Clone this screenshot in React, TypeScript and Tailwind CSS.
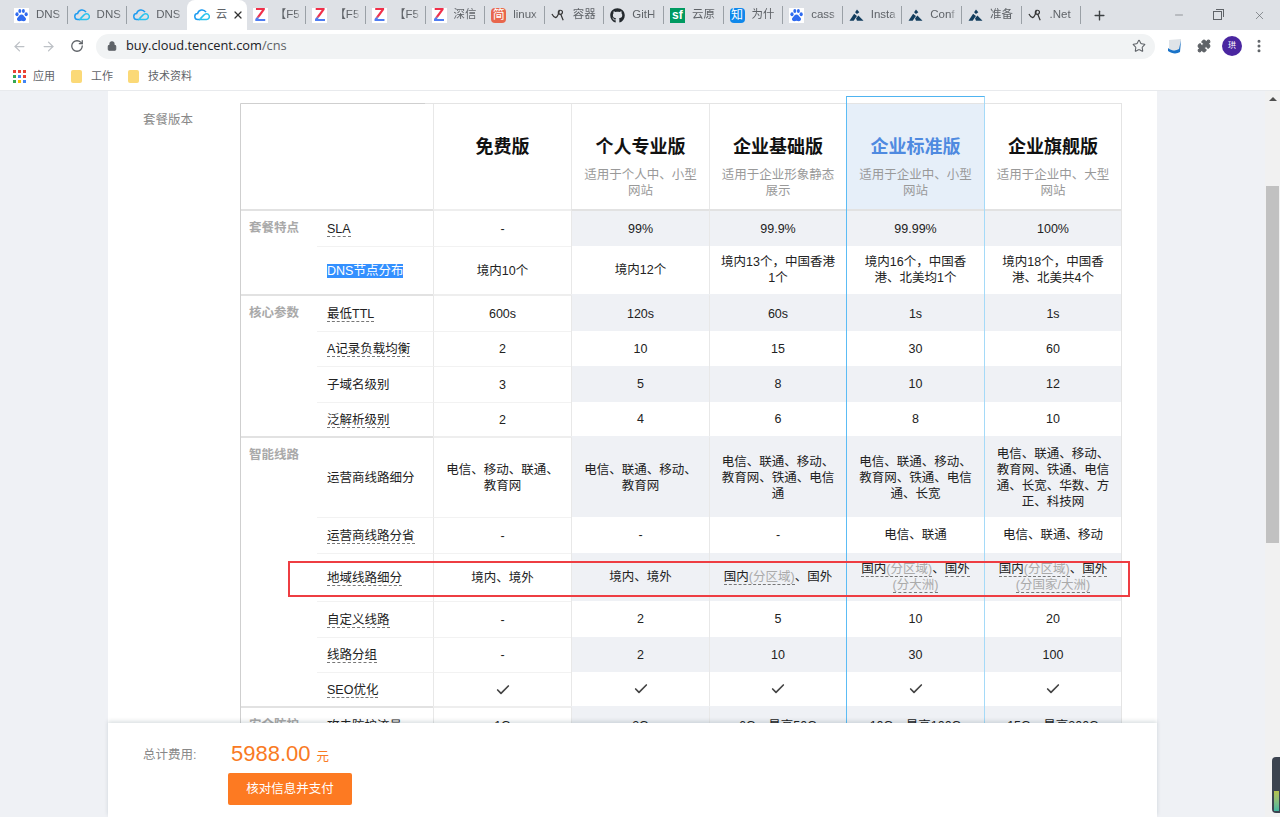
import type { ReactNode } from "react";
import {
  ArrowLeft,
  ArrowRight,
  Check,
  EllipsisVertical,
  Lock,
  Minus,
  Plus,
  Puzzle,
  RotateCw,
  Star,
  X,
} from "lucide-react";
import { FaGithub } from "react-icons/fa";

function Baidu() {
  return (
    <svg viewBox="0 0 16 16" className="size-[15px] bg-white">
      <g fill="#2f6bf0">
        <ellipse cx="3.2" cy="6.6" rx="1.7" ry="2.1" />
        <ellipse cx="6.2" cy="3.2" rx="1.6" ry="2.1" />
        <ellipse cx="10" cy="3.2" rx="1.6" ry="2.1" />
        <ellipse cx="13" cy="6.6" rx="1.7" ry="2.1" />
        <path d="M8 7c-2 0-2.6 2-4 3.2-1.500 1.300-.8 3.800 1.500 3.800 1 0 1.700-.4 2.500-.4s1.500.4 2.500.4c2.300 0 3-2.500 1.500-3.800C10.600 9 10 7 8 7z" />
      </g>
    </svg>
  );
}

function Cloud() {
  return (
    <svg viewBox="0 0 16 16" className="size-[16px]" fill="none" strokeWidth="1.5">
      <path d="M6 12.500H4a3 3 0 0 1-.4-6A4.600 4.600 0 0 1 12 5.200" stroke="#1f9cf0" />
      <path d="M5 12.500h7.500a2.900 2.900 0 1 0-2.400-4.600L6.400 11.600" stroke="#28c3ee" />
    </svg>
  );
}

function ZLogo() {
  return (
    <span className="flex size-[15px] items-center justify-center bg-white">
      <span className="bg-gradient-to-b from-[#f0304a] from-55% to-[#4f7cf0] to-70% bg-clip-text text-[18px] leading-[15px] font-bold text-transparent">
        Z
      </span>
    </span>
  );
}

function Jian() {
  return (
    <span className="flex size-[15px] items-center justify-center rounded-sm bg-[#e8664c] text-[12px] leading-none text-white">
      简
    </span>
  );
}

function Sf() {
  return (
    <span className="flex size-[15px] items-center justify-center bg-[#009a61] text-[12px] leading-none font-bold text-white">
      sf
    </span>
  );
}

function Zhi() {
  return (
    <span className="flex size-[15px] items-center justify-center rounded-sm bg-[#0f88eb] text-[12px] leading-none text-white">
      知
    </span>
  );
}

function Curl() {
  return (
    <svg viewBox="0 0 16 16" className="size-[15px]" fill="none" stroke="#333" strokeWidth="1.300">
      <path d="M1 6.500c1 2 2.500 3.500 4 3.800C7.500 9 8.500 5 9 2" />
      <circle cx="10" cy="4.600" r="2.200" />
      <path d="M10.500 7l2.500 6" />
    </svg>
  );
}

function Peak() {
  return (
    <svg viewBox="0 0 16 16" className="size-[15px]" fill="#123d5e">
      <path d="M8.500 1.500l2.500 3-2.500 2-2-2z" />
      <path d="M5.500 6l3 2.500-3.500 5H.5z" />
      <path d="M10 8l5.500 5.500H8.500L7.500 11z" />
    </svg>
  );
}

const tabs: { icon: ReactNode; title: string; active?: boolean; bare?: boolean }[] = [
  { icon: <Baidu />, title: "DNS" },
  { icon: <Cloud />, title: "DNS" },
  { icon: <Cloud />, title: "DNS", bare: true },
  { icon: <Cloud />, title: "云", active: true, bare: true },
  { icon: <ZLogo />, title: "【F5" },
  { icon: <ZLogo />, title: "【F5" },
  { icon: <ZLogo />, title: "【F5" },
  { icon: <ZLogo />, title: "深信" },
  { icon: <Jian />, title: "linux" },
  { icon: <Curl />, title: "容器" },
  { icon: <FaGithub className="size-[15px] text-[#24292e]" />, title: "GitH" },
  { icon: <Sf />, title: "云原" },
  { icon: <Zhi />, title: "为什" },
  { icon: <Baidu />, title: "cass" },
  { icon: <Peak />, title: "Insta" },
  { icon: <Peak />, title: "Conf" },
  { icon: <Peak />, title: "准备" },
  { icon: <Curl />, title: ".Net" },
];

function TabStrip() {
  return (
    <div className="flex h-[30px] items-center bg-[#dee1e6] pl-[8px] text-[11.5px] text-[#5f6368]">
      {tabs.map((tab, i) => (
        <div
          key={i}
          className={
            tab.active
              ? "relative flex h-[30px] w-[60px] shrink-0 items-center rounded-t-lg bg-white pl-[7px]"
              : "relative flex h-[30px] w-[59.6px] shrink-0 items-center pl-[6px]"
          }
        >
          {tab.icon}
          <span
            className={
              tab.active
                ? "ml-[6px] w-[12px] whitespace-nowrap"
                : "ml-[7px] w-[26px] whitespace-nowrap [mask-image:linear-gradient(to_right,black_80%,transparent)]"
            }
          >
            {tab.title}
          </span>
          {tab.active ? <X className="ml-[4px] size-[12px] text-[#333]" strokeWidth={2.500} /> : null}
          {tab.bare ? null : <span className="absolute right-0 h-[18px] w-px bg-[#9aa0a6]" />}
        </div>
      ))}
      <Plus className="ml-[11px] size-[15px] text-[#3c4043]" strokeWidth={2.200} />
      <div className="ml-auto flex items-center text-[#5f6368]">
        <Minus className="mr-[28px] size-[12px]" strokeWidth={1.200} />
        <span className="relative mr-[31px] size-[9px] border border-[#5f6368]">
          <span className="absolute -top-[3px] -right-[3px] size-[8px] border-t border-r border-[#5f6368]" />
        </span>
        <X className="mr-[14px] size-[13px]" strokeWidth={1.200} />
      </div>
    </div>
  );
}

function Toolbar() {
  return (
    <div className="flex h-[30px] items-center bg-white pt-[2px] pl-[12px] text-[#5f6368]">
      <ArrowLeft className="size-[15px] text-[#bdc1c6]" />
      <ArrowRight className="ml-[14px] size-[15px] text-[#bdc1c6]" />
      <RotateCw className="ml-[14px] size-[14px] text-[#5f6368]" strokeWidth={2.200} />
      <div className="ml-[12px] flex h-[25px] w-[1059px] items-center rounded-full bg-[#f1f3f4] pl-[11px] text-[13px]">
        <Lock className="size-[10px] fill-[#5f6368]" strokeWidth={2.500} />
        <span className="ml-[9px] [font-family:'Open_Sans','Noto_Sans',sans-serif] text-[12.800px] text-[#202124]">
          buy.cloud.tencent.com<span className="text-[#5f6368]">/cns</span>
        </span>
        <Star className="mr-[9px] ml-auto size-[14px] text-[#5f6368]" strokeWidth={1.800} />
      </div>
      <svg viewBox="0 0 16 16" className="ml-[12px] size-[16px]">
        <path d="M2 2l12-1-1 11H2z" fill="#dfe3e8" />
        <path d="M1 10c3 3 8 3 11 1l2-9-1 12c-3 2-8 2-12-1z" fill="#1a73c8" />
      </svg>
      <Puzzle className="ml-[14px] size-[14px] fill-[#5f6368]" />
      <span className="ml-[11px] flex size-[20px] items-center justify-center rounded-full bg-[#4a26a0] text-[8px] text-white">
        珙
      </span>
      <EllipsisVertical className="ml-[9px] size-[16px]" strokeWidth={2.500} />
    </div>
  );
}

function AppsGrid() {
  const dots = [
    "bg-[#ea4335]", "bg-[#ea4335]", "bg-[#ea4335]",
    "bg-[#34a853]", "bg-[#4285f4]", "bg-[#ea4335]",
    "bg-[#34a853]", "bg-[#fbbc04]", "bg-[#4285f4]",
  ];
  return (
    <span className="grid w-[13px] grid-cols-3 gap-[2px]">
      {dots.map((dot, i) => (
        <span key={i} className={`size-[3px] ${dot}`} />
      ))}
    </span>
  );
}

function Bookmarks() {
  return (
    <div className="flex h-[31px] items-center border-b border-[#e8eaed] bg-white pt-[2px] pl-[13px] text-[11px] text-[#5f6368]">
      <AppsGrid />
      <span className="ml-[7px]">应用</span>
      <span className="ml-[16px] h-[13px] w-[11px] rounded-[2px] bg-[#fbd977]" />
      <span className="ml-[9px]">工作</span>
      <span className="ml-[15px] h-[13px] w-[11px] rounded-[2px] bg-[#fbd977]" />
      <span className="ml-[9px]">技术资料</span>
    </div>
  );
}

function Dashed({ children }: { children: ReactNode }) {
  return <span className="border-b border-dashed border-[#777] leading-[14px]">{children}</span>;
}

const Tick = <Check className="mx-auto size-[16px] text-[#444]" strokeWidth={2.500} />;

const regionBig = (
  <>
    <Dashed>
      国内<span className="text-[#aaa]">(分区域)</span>
    </Dashed>
    、<Dashed>国外</Dashed>
    <br />
    <Dashed>
      <span className="text-[#aaa]">(分大洲)</span>
    </Dashed>
  </>
);

const regionMax = (
  <>
    <Dashed>
      国内<span className="text-[#aaa]">(分区域)</span>
    </Dashed>
    、<Dashed>国外</Dashed>
    <br />
    <Dashed>
      <span className="text-[#aaa]">(分国家/大洲)</span>
    </Dashed>
  </>
);

type Row = { label: ReactNode; height: string; cells: ReactNode[] };

const groups: { name: string; rows: Row[] }[] = [
  {
    name: "套餐特点",
    rows: [
      { label: <Dashed>SLA</Dashed>, height: "h-[37px]", cells: ["-", "99%", "99.9%", "99.99%", "100%"] },
      {
        label: <span className="bg-[#3390ff] text-white">DNS节点分布</span>,
        height: "h-[48px]",
        cells: [
          "境内10个",
          "境内12个",
          <>
            境内13个，中国香港
            <br />
            1个
          </>,
          <>
            境内16个，中国香
            <br />
            港、北美均1个
          </>,
          <>
            境内18个，中国香
            <br />
            港、北美共4个
          </>,
        ],
      },
    ],
  },
  {
    name: "核心参数",
    rows: [
      { label: <Dashed>最低TTL</Dashed>, height: "h-[37px]", cells: ["600s", "120s", "60s", "1s", "1s"] },
      { label: <Dashed>A记录负载均衡</Dashed>, height: "h-[35px]", cells: ["2", "10", "15", "30", "60"] },
      { label: "子域名级别", height: "h-[36px]", cells: ["3", "5", "8", "10", "12"] },
      { label: <Dashed>泛解析级别</Dashed>, height: "h-[34px]", cells: ["2", "4", "6", "8", "10"] },
    ],
  },
  {
    name: "智能线路",
    rows: [
      {
        label: "运营商线路细分",
        height: "h-[81px]",
        cells: [
          "电信、移动、联通、教育网",
          "电信、联通、移动、教育网",
          "电信、联通、移动、教育网、铁通、电信通",
          "电信、联通、移动、教育网、铁通、电信通、长宽",
          "电信、联通、移动、教育网、铁通、电信通、长宽、华数、方正、科技网",
        ],
      },
      {
        label: <Dashed>运营商线路分省</Dashed>,
        height: "h-[36px]",
        cells: ["-", "-", "-", "电信、联通", "电信、联通、移动"],
      },
      {
        label: <Dashed>地域线路细分</Dashed>,
        height: "h-[48px]",
        cells: [
          "境内、境外",
          "境内、境外",
          <>
            <Dashed>
              国内<span className="text-[#aaa]">(分区域)</span>
            </Dashed>
            、国外
          </>,
          regionBig,
          regionMax,
        ],
      },
      { label: <Dashed>自定义线路</Dashed>, height: "h-[36px]", cells: ["-", "2", "5", "10", "20"] },
      { label: <Dashed>线路分组</Dashed>, height: "h-[35px]", cells: ["-", "2", "10", "30", "100"] },
      { label: <Dashed>SEO优化</Dashed>, height: "h-[34px]", cells: [Tick, Tick, Tick, Tick, Tick] },
    ],
  },
  {
    name: "安全防护",
    rows: [
      {
        label: <Dashed>攻击防护流量</Dashed>,
        height: "h-[38px]",
        cells: ["1G", "2G", "6G，最高50G", "10G，最高100G", "15G，最高200G"],
      },
    ],
  },
];

const plans = [
  { name: "免费版", desc: "" },
  { name: "个人专业版", desc: "适用于个人中、小型网站" },
  { name: "企业基础版", desc: "适用于企业形象静态展示" },
  { name: "企业标准版", desc: "适用于企业中、小型网站", featured: true },
  { name: "企业旗舰版", desc: "适用于企业中、大型网站" },
];

function cellClass(g: number, r: number, c: number, gray: boolean) {
  const base = "flex items-center justify-center border-l border-[#e8e8e8] px-[10px] text-center";
  if (c === 0) {
    return r === 0 ? `${base} border-t-2 border-t-[#eeeeee]` : `${base} border-t border-t-[#f2f2f2]`;
  }
  if (!gray) return base;
  if (r > 0) return `${base} bg-[#eff1f5]`;
  // only the row right under the header keeps a line across the stripes
  return g === 0
    ? `${base} border-t-2 border-t-[#e2e2e2] bg-[#eff1f5]`
    : `${base} border-t-2 border-t-[#eff1f5] bg-[#eff1f5]`;
}

function PlanTable() {
  let stripe = 0;
  return (
    <div className="relative w-[882px] border-t border-r border-l border-t-[#e4e4e4] border-r-[#e4e4e4] border-l-[#cfcfcf] text-[12.5px] leading-[16px] text-[#222]">
      <div className="absolute -top-px left-0 w-[184px] border-t border-[#cfcfcf]" />
      <div className="grid h-[105px] grid-cols-[192px_138px_138px_137px_138px_137px]">
        <div />
        {plans.map((plan) => (
          <div
            key={plan.name}
            className={
              plan.featured
                ? "border-l border-[#e8e8e8] bg-[#e6eff9] px-[10px] pt-[31px] text-center"
                : "border-l border-[#e8e8e8] px-[10px] pt-[31px] text-center"
            }
          >
            <div
              className={
                plan.featured
                  ? "text-[18px] leading-[24px] font-bold text-[#4f8ae0]"
                  : "text-[18px] leading-[24px] font-bold text-[#111]"
              }
            >
              {plan.name}
            </div>
            <div className="mt-[8px] text-[#999]">{plan.desc}</div>
          </div>
        ))}
      </div>

      {groups.map((group, g) => (
        <div key={group.name} className="flex">
          <div className="w-[76px] shrink-0 border-t-2 border-[#e2e2e2] pt-[9px] pl-[8px] font-bold text-[#a9a9a9]">
            {group.name}
          </div>
          <div className="flex-1">
            {group.rows.map((row, r) => {
              const gray = stripe++ % 2 === 0;
              return (
                <div
                  key={r}
                  className={`grid grid-cols-[116px_138px_138px_137px_138px_137px] ${row.height}`}
                >
                  <div
                    className={
                      r
                        ? "flex items-center border-t border-[#f2f2f2] pl-[10px]"
                        : "flex items-center border-t-2 border-[#e2e2e2] pl-[10px]"
                    }
                  >
                    <span>{row.label}</span>
                  </div>
                  {row.cells.map((cell, c) => (
                    <div key={c} className={cellClass(g, r, c, gray)}>
                      <div className="w-full">{cell}</div>
                    </div>
                  ))}
                </div>
              );
            })}
          </div>
        </div>
      ))}

      {/* featured column outline sits over the table */}
      <div className="pointer-events-none absolute -top-[8px] bottom-0 left-[605px] w-[139px] border-t border-r border-l border-t-[#4fb3f0] border-r-[#a5daf8] border-l-[#5cbcf5]" />
      {/* hand-drawn red annotation */}
      <div className="pointer-events-none absolute top-[457px] left-[47px] h-[36px] w-[842px] border-2 border-[#ee3d42]" />
    </div>
  );
}

function Scrollbar() {
  return (
    <div className="relative flex w-[15px] shrink-0 flex-col items-center bg-[#f1f1f1]">
      <span className="mt-[6px] h-0 w-0 border-x-[4px] border-b-[4px] border-x-transparent border-b-[#505050]" />
      <div className="mt-[85px] h-[357px] w-[13px] bg-[#c1c1c1]" />
      {/* taskbar meter widget overlapping the corner */}
      <div className="absolute right-0 bottom-[4px] flex h-[56px] w-[8px] flex-col justify-end rounded-l-sm bg-[#3c4450] pb-[2px] pl-[2px]">
        <div className="h-[20px] w-[5px] bg-gradient-to-b from-[#b7c24a] to-[#3fb6a0]" />
      </div>
    </div>
  );
}

export default function App() {
  return (
    <div className="flex h-[817px] w-[1280px] flex-col overflow-hidden bg-[#eff1f5] [font-family:'Liberation_Sans','Noto_Sans_CJK_SC',sans-serif]">
      <TabStrip />
      <Toolbar />
      <Bookmarks />
      <div className="flex min-h-0 flex-1">
        <div className="flex flex-1 flex-col px-[108px]">
          <main className="h-[632px] overflow-hidden bg-white pt-[12px] pl-[132px]">
            <div className="flex">
              <div className="-ml-[132px] w-[132px] shrink-0 pt-[9px] pl-[35px] text-[12.5px] leading-[16px] text-[#888]">
                套餐版本
              </div>
              <PlanTable />
            </div>
          </main>
          <footer className="relative flex flex-1 bg-white pl-[35px] shadow-[0_-2px_4px_rgba(0,40,60,0.14)]">
            <div className="w-[85px] shrink-0 pt-[24px] text-[12.5px] leading-[16px] text-[#888]">总计费用:</div>
            <div className="pt-[17px]">
              <div className="flex items-baseline pl-[3px] leading-[28px] text-[#f97a23]">
                <span className="text-[22px]">5988.00</span>
                <span className="ml-[6px] text-[12.5px]">元</span>
              </div>
              <button className="mt-[2px] h-[32px] w-[124px] rounded-[2px] bg-[#fd7a22] text-[12.5px] text-white">
                核对信息并支付
              </button>
            </div>
          </footer>
        </div>
        <Scrollbar />
      </div>
    </div>
  );
}
